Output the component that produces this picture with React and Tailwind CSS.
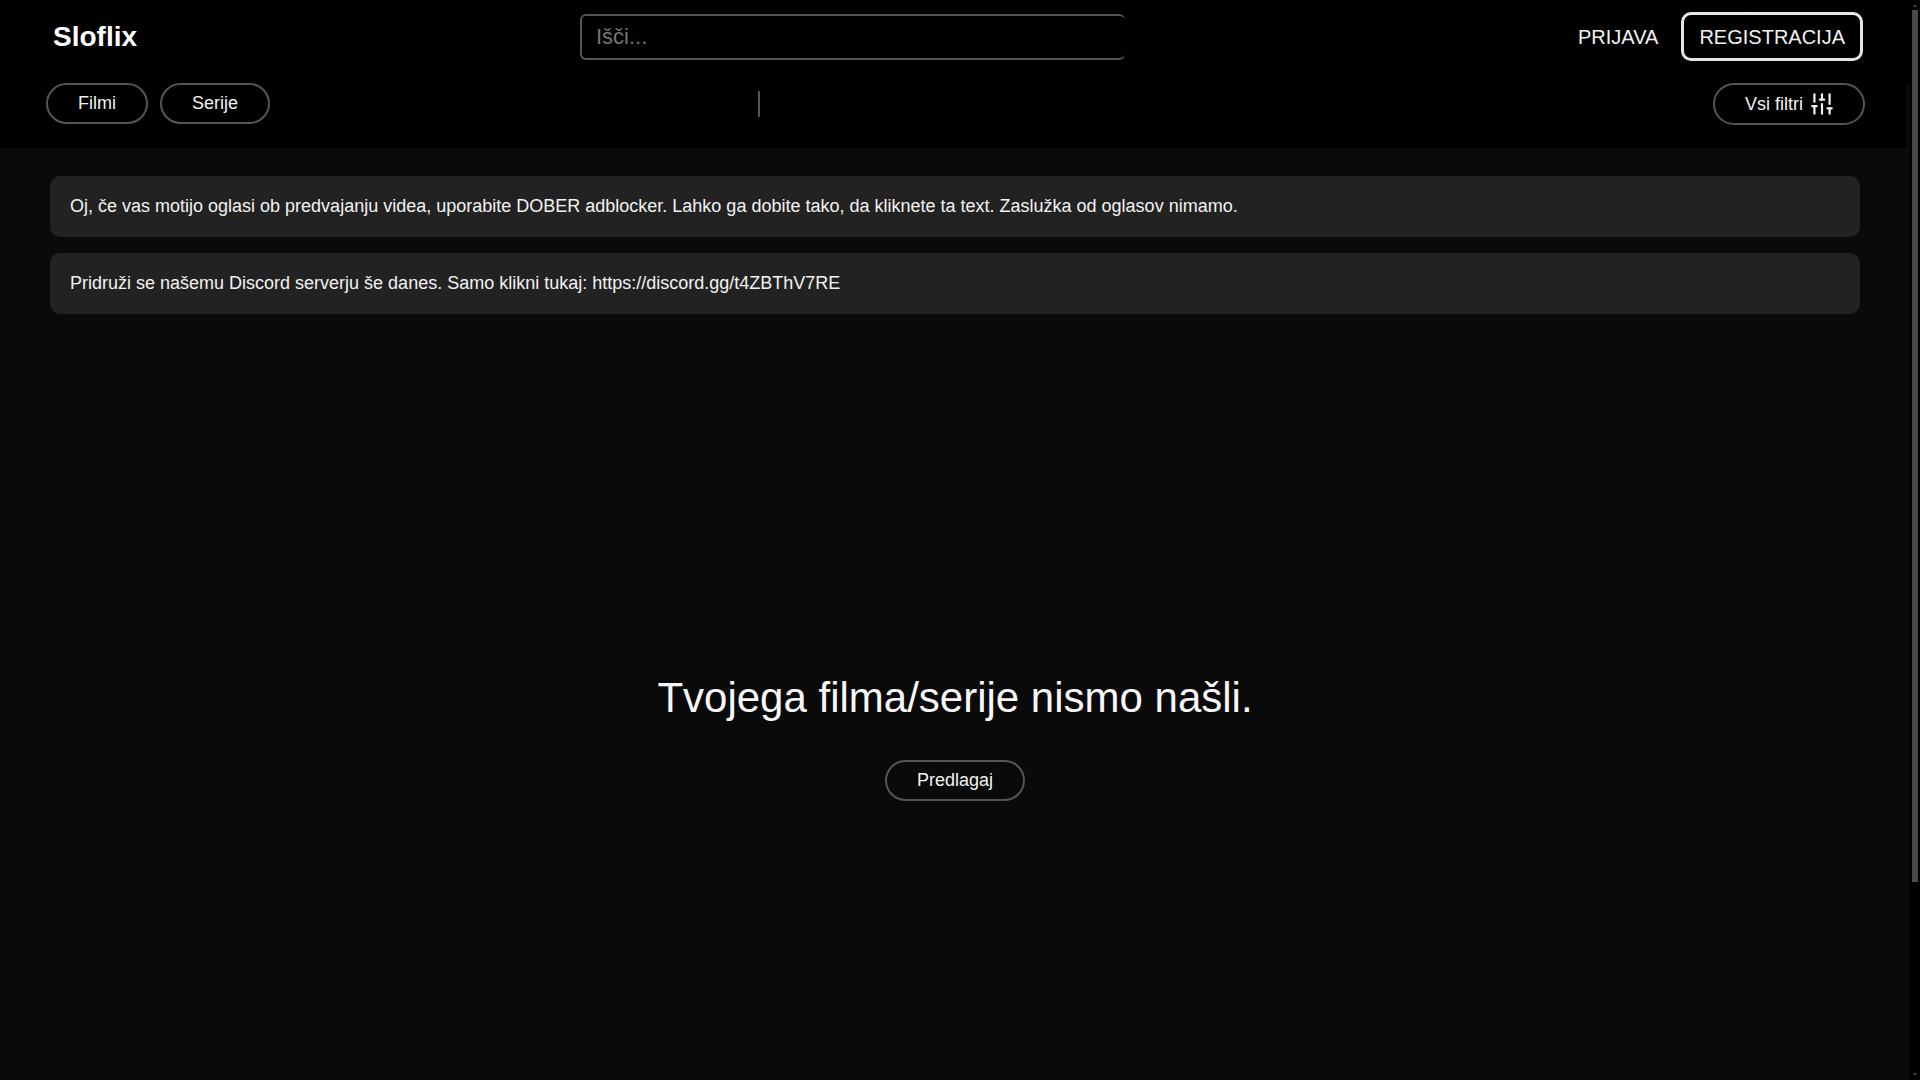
import {SlidersVertical} from "lucide-react";

const PillButton = ({className = "", children}) => {
  return (
    <button
      className={`flex items-center rounded-full border-2 border-[#555] px-[30px] py-2 text-lg leading-[21px] text-[#f2f2f2] ${className}`}
    >
      {children}
    </button>
  );
};

const Notice = ({children}) => {
  return (
    <div className="rounded-[10px] bg-[#222] px-5 py-5 text-lg leading-[21px] text-[#f2f2f2]">
      {children}
    </div>
  );
};

const ScrollArrow = ({points}) => {
  return (
    <svg width="10" height="10" viewBox="0 0 10 10" className="shrink-0">
      <polygon points={points} fill="#555" />
    </svg>
  );
};

const Scrollbar = () => {
  return (
    <aside className="flex h-screen w-2.5 shrink-0 flex-col items-center bg-black">
      <ScrollArrow points="5,5 7,7 3,7" />
      <div className="h-[872px] w-1.5 bg-[#4a4a4a]" />
      <div className="mt-auto">
        <ScrollArrow points="3,3 7,3 5,5" />
      </div>
    </aside>
  );
};

const App = () => {
  return (
    <div
      className="flex h-screen overflow-hidden bg-[#0a0a0a]"
      style={{fontFamily: '"Liberation Sans", Arial, sans-serif'}}
    >
      <div className="min-w-0 flex-1">
        <header>
          <div className="flex h-[86px] items-start bg-black pr-[47px] pt-3">
            <div className="w-[580px] pl-[53px] pt-[9px] text-[28px] font-bold leading-8 text-white">
              Sloflix
            </div>
            <input
              type="text"
              placeholder="Išči..."
              className="mt-0.5 h-[46px] w-[545px] rounded-[6px] border-2 border-r-0 border-[#555] bg-black px-3.5 text-[22px] text-white outline-none placeholder:text-[#757575]"
            />
            <div className="ml-auto flex items-center gap-[23px]">
              <a className="text-xl text-[#f2f2f2]">PRIJAVA</a>
              <a className="rounded-[10px] border-[3px] border-[#e5e5e5] px-[15px] pb-[9px] pt-[11px] text-xl leading-[23px] text-[#f2f2f2]">
                REGISTRACIJA
              </a>
            </div>
          </div>
          <div className="mr-1 flex h-[62px] items-start bg-black pl-[46px] pr-[41px]">
            <div className="-mt-[3px] flex gap-3">
              <PillButton>Filmi</PillButton>
              <PillButton>Serije</PillButton>
            </div>
            <div className="ml-[488px] mt-[5px] h-[26px] w-0.5 bg-[#555]" />
            <PillButton className="-mt-[3px] ml-auto h-[42px] gap-1.5 !pr-7">
              Vsi filtri
              <SlidersVertical size={26} strokeWidth={2} />
            </PillButton>
          </div>
        </header>

        <main>
          <div className="flex flex-col gap-4 px-[50px] pt-7">
            <Notice>
              Oj, če vas motijo oglasi ob predvajanju videa, uporabite DOBER
              adblocker. Lahko ga dobite tako, da kliknete ta text. Zaslužka od
              oglasov nimamo.
            </Notice>
            <Notice>
              Pridruži se našemu Discord serverju še danes. Samo klikni tukaj:
              https://discord.gg/t4ZBThV7RE
            </Notice>
          </div>

          <div className="flex flex-col items-center pt-[358px]">
            <h1 className="text-[42px] leading-[52px] text-[#f7f7f7]">
              Tvojega filma/serije nismo našli.
            </h1>
            <PillButton className="mt-[36px]">Predlagaj</PillButton>
          </div>
        </main>
      </div>
      <Scrollbar />
    </div>
  );
};

export default App;
